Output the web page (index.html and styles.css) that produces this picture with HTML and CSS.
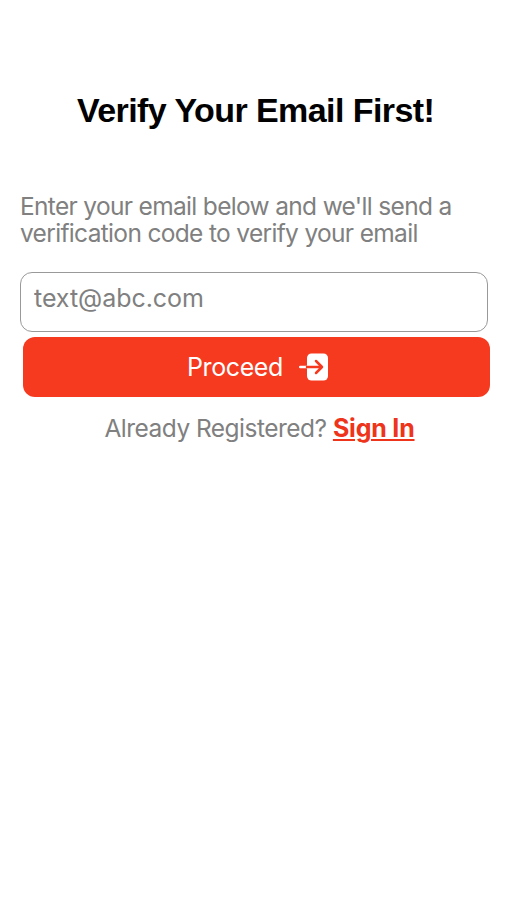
FILE: index.html
```html
<!DOCTYPE html>
<html lang="en">
<head>
<meta charset="utf-8">
<meta name="viewport" content="width=device-width, initial-scale=1">
<title>Verify Your Email</title>
<link rel="stylesheet" href="styles.css">
</head>
<body>
<main class="screen">
  <h1 class="title">Verify Your Email First!</h1>
  <p class="intro">Enter your email below and we'll send a<br>verification code to verify your email</p>
  <form class="form">
    <input class="email" type="email" placeholder="text@abc.com" aria-label="Email">
    <button class="proceed" type="button">
      <span class="proceed-label">Proceed</span>
      <svg class="icon" viewBox="0 0 30 28" width="30" height="28" aria-hidden="true">
        <rect x="8" y="0.5" width="21" height="27" rx="4.5" fill="#fff"/>
        <path d="M1.2 14H8" stroke="#fff" stroke-width="2.4" stroke-linecap="round"/>
        <path d="M8 14H22.5M17 8L23 14L17 20" fill="none" stroke="#f63a20" stroke-width="2.5" stroke-linecap="round" stroke-linejoin="round"/>
      </svg>
    </button>
  </form>
  <p class="signin"><span class="signin-text">Already Registered?</span><a class="signin-link" href="#">Sign In</a></p>
</main>
</body>
</html>
```
FILE: styles.css
```css
* { box-sizing: border-box; }
body { margin: 0; background: #fff; font-family: Inter, sans-serif; }
.screen { min-height: 900px; padding: 90px 17px 0 20px; }
.title {
  margin: 0;
  padding-left: 57px;
  font: bold 34px/40px "Liberation Sans", sans-serif;
  letter-spacing: -0.57px;
  color: #000;
  white-space: nowrap;
}
.intro {
  margin: 63px 0 0;
  font-size: 24.5px;
  line-height: 27px;
  letter-spacing: -0.67px;
  color: #808080;
  white-space: nowrap;
}
.form { display: flex; flex-direction: column; gap: 5px; margin-top: 25px; }
.email {
  width: 468px;
  height: 60px;
  padding: 0 13px 9px;
  border: 1.5px solid #999;
  border-radius: 12px;
  font: 25px Inter, sans-serif;
  letter-spacing: -0.05px;
  outline: none;
}
.email::placeholder { color: #808080; opacity: 1; }
.proceed {
  display: flex;
  align-items: center;
  width: 467px;
  height: 60px;
  margin-left: 3px;
  padding: 0 0 0 164px;
  gap: 16px;
  border: 0;
  border-radius: 12px;
  background: #f63a20;
  color: #fff;
  font: 25px Inter, sans-serif;
  letter-spacing: -0.4px;
}
.signin {
  display: flex;
  gap: 6.5px;
  margin: 16px 0 0;
  padding-left: 84.5px;
  font-size: 24.5px;
  line-height: 30px;
  letter-spacing: -0.53px;
  color: #808080;
  white-space: nowrap;
}
.signin-link {
  color: #ee351c;
  font-size: 25px;
  font-weight: 700;
  letter-spacing: -0.2px;
  text-decoration-thickness: 2px;
  text-underline-offset: 2px;
}
```
